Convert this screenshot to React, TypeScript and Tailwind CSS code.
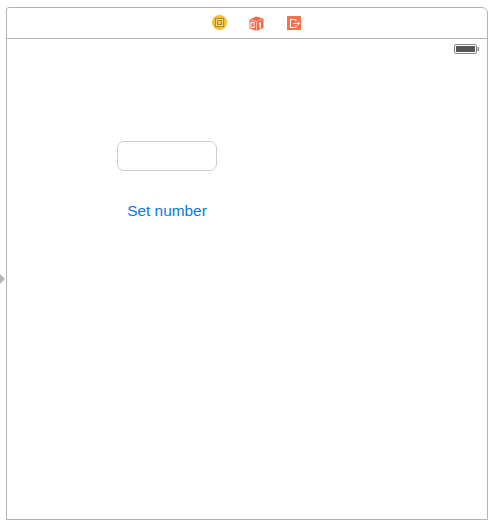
export default function App() {
  return (
    <div className="relative w-[494px] h-[526px] bg-white pt-[7px] pl-[6px] font-['Liberation_Sans',sans-serif]">
      <div className="w-[482px] h-[513px] border border-[#b3b3b3] rounded-tr-[6px] rounded-tl-[3px] flex flex-col">
        <div className="h-[31px] border-b border-[#b3b3b3] flex items-center justify-center pl-[19px] pb-[1px] shrink-0">
          <svg width="15" height="15" viewBox="0 0 15 15">
            <circle cx="7.5" cy="7.5" r="7.5" fill="#f7bd33" />
            <rect x="3.5" y="3.5" width="8" height="8" fill="#f9d97a" stroke="#a98a35" />
            <rect x="5.5" y="5.5" width="4" height="4" fill="#f7c648" stroke="#a98a35" />
          </svg>
          <svg className="ml-[22px] mt-[1px]" width="15" height="15" viewBox="0 0 15 15">
            <path d="M0.5 3.5 L7 0.5 L14.5 2.5 L14.5 12 L7.5 15 L0.5 12.5 Z" fill="#f2694b" />
            <path d="M0.5 3.5 L7.5 5.5 L14.5 2.5 M7.5 5.5 L7.5 15" stroke="#ffc9b8" strokeWidth="0.8" fill="none" />
            <rect x="2" y="6.5" width="3" height="5" fill="none" stroke="#fff" strokeWidth="1" />
            <path d="M9.8 8 L11.2 7 L11.2 12.5" stroke="#fff" strokeWidth="1.3" fill="none" />
          </svg>
          <svg className="ml-[23px] mt-[1px]" width="14" height="14" viewBox="0 0 14 14">
            <rect width="14" height="14" fill="#f4734d" />
            <path d="M9 5 L9 3.5 L3.5 3.5 L3.5 11.5 L9 11.5 L9 9.5" stroke="#fff" strokeWidth="1" fill="none" />
            <path d="M6.5 7.5 L12.5 7.5 M10.8 5.8 L12.5 7.5 L10.8 9.2" stroke="#fff" strokeWidth="1" fill="none" />
          </svg>
        </div>
        <div className="flex justify-end pt-[5px] pr-[8px]">
          <svg width="25" height="10" viewBox="0 0 25 10">
            <rect x="0.5" y="0.5" width="22" height="9" rx="1.5" fill="#fff" stroke="#858585" />
            <rect x="2" y="2" width="19" height="6" fill="#555555" />
            <rect x="23.5" y="3" width="1.5" height="4" fill="#858585" />
          </svg>
        </div>
        <div className="ml-[110px] mt-[87px] w-[100px] flex flex-col items-center">
          <div className="w-[100px] h-[30px] border border-[#cccccc] rounded-[7px] bg-white" />
          <div className="mt-[30px] text-[15.4px] leading-[20px] text-[#0a78e0] whitespace-nowrap">Set number</div>
        </div>
      </div>
      <div className="absolute left-0 top-[274px] w-0 h-0 border-y-[5px] border-y-transparent border-l-[5px] border-l-[#b5b5b5]" />
    </div>
  );
}
